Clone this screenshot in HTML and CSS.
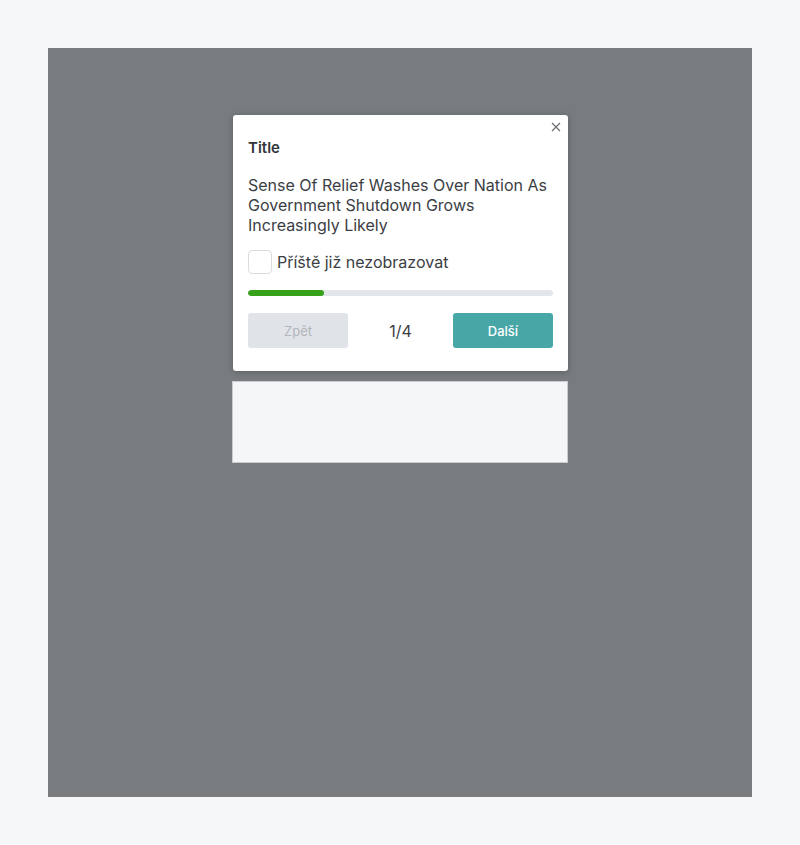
FILE: index.html
```html
<!DOCTYPE html>
<html lang="cs">
<head>
<meta charset="utf-8">
<link rel="stylesheet" href="styles.css">
</head>
<body>
<div class="overlay">
  <div class="dialog">
    <button class="close" aria-label="Zavřít">
      <svg width="10" height="10" viewBox="0 0 10 10"><path d="M1 1L9 9M9 1L1 9" stroke="#6b6e73" stroke-width="1.2" fill="none"/></svg>
    </button>
    <div class="title">Title</div>
    <div class="text">Sense Of Relief Washes Over Nation As Government Shutdown Grows Increasingly Likely</div>
    <label class="check"><span class="box"></span><span>Příště již nezobrazovat</span></label>
    <div class="progress"><div class="fill" style="width:25%"></div></div>
    <div class="actions">
      <button class="btn btn-back">Zpět</button>
      <span class="count">1/4</span>
      <button class="btn btn-next">Další</button>
    </div>
  </div>
  <div class="panel"></div>
</div>
</body>
</html>
```
FILE: styles.css
```css
html, body { margin: 0; padding: 0; }
body {
  background: #f6f7f9;
  padding: 48px;
  font-family: Inter, "Noto Sans", sans-serif;
  color: #3b3e44;
}
.overlay {
  background: #797c7f;
  height: 749px;
  box-sizing: border-box;
  padding-top: 67px;
  display: flex;
  flex-direction: column;
  align-items: center;
  gap: 10px;
}
.dialog {
  position: relative;
  width: 335px;
  margin-left: 1px;
  box-sizing: border-box;
  background: #fff;
  border-radius: 3px;
  padding: 23px 15px 23px 15px;
  box-shadow: 0 1px 6px rgba(0,0,0,0.25);
}
.close {
  position: absolute;
  top: 5px;
  right: 5px;
  border: 0;
  background: none;
  padding: 0;
  width: 14px;
  height: 14px;
  display: flex;
  align-items: center;
  justify-content: center;
}
.title {
  font-size: 15px;
  font-weight: 600;
  line-height: 20px;
  color: #33363b;
}
.text {
  margin-top: 17px;
  font-size: 16px;
  line-height: 20px;
  color: #3b3e44;
}
.check {
  margin-top: 15px;
  display: flex;
  align-items: center;
  gap: 5px;
  font-size: 16px;
  line-height: 24px;
}
.box {
  width: 22px;
  height: 22px;
  border: 1px solid #d9dce0;
  border-radius: 4px;
  background: #fff;
}
.progress {
  margin-top: 16px;
  height: 6px;
  background: #e2e5e9;
  border-radius: 3px;
  overflow: hidden;
}
.fill {
  height: 100%;
  background: #35a21a;
  border-radius: 3px;
}
.actions {
  margin-top: 17px;
  display: flex;
  justify-content: space-between;
  align-items: center;
}
.btn {
  width: 100px;
  height: 35px;
  border: 0;
  border-radius: 3px;
  font-family: Inter, "Noto Sans", sans-serif;
  font-size: 13px;
}
.btn-back { background: #e0e3e8; color: #b3b6bb; }
.btn-next { background: #47a7a7; color: #fff; font-weight: 500; }
.count { font-size: 16px; color: #3b3e44; }
.panel {
  width: 336px;
  height: 82px;
  box-sizing: border-box;
  background: #f5f6f8;
  border: 1px solid #c9ccd0;
}
```
